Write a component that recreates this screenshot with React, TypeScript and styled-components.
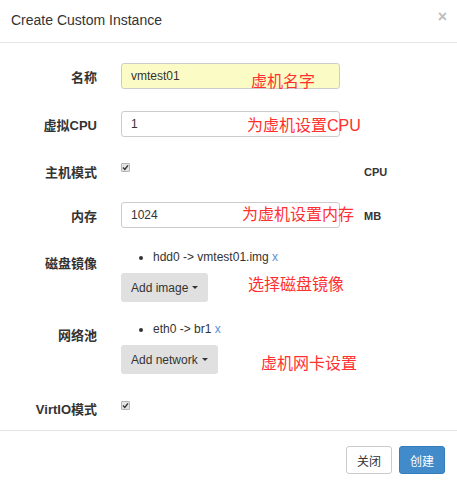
import React from 'react';
import styled, {createGlobalStyle} from 'styled-components'

const GlobalStyle = createGlobalStyle`
    body{
        margin:0;
        background:#fff;
        font-family:"Liberation Sans", "Noto Sans CJK SC", sans-serif;
        color:#333;
    }
`

const notes = [
    {text:"虚机名字", x:251, y:74},
    {text:"为虚机设置CPU", x:247, y:118},
    {text:"为虚机设置内存", x:242, y:207},
    {text:"选择磁盘镜像", x:248, y:277},
    {text:"虚机网卡设置", x:261, y:356},
]

const CheckMark = () => (
    <CheckBox>
        <svg width="7" height="7" viewBox="0 0 7 7">
            <path d="M1 3.6 L2.8 5.4 L6 1.4" stroke="#333" strokeWidth="1.4" fill="none"/>
        </svg>
    </CheckBox>
)

const CreateInstanceModal = () => {
    return (
    <Modal>
        <GlobalStyle/>
        <Header>
            <Title>Create Custom Instance</Title>
            <Close>×</Close>
        </Header>
        <Body>
            <FormRow $top={0}>
                <Label>名称</Label>
                <TextInput $filled value="vmtest01" readOnly/>
            </FormRow>
            <FormRow $top={22}>
                <Label>虚拟CPU</Label>
                <TextInput value="1" readOnly/>
            </FormRow>
            <FormRow $top={21}>
                <Label>主机模式</Label>
                <CheckCell><CheckMark/></CheckCell>
                <Unit>CPU</Unit>
            </FormRow>
            <FormRow $top={20}>
                <Label>内存</Label>
                <TextInput value="1024" readOnly/>
                <Unit>MB</Unit>
            </FormRow>
            <FormRow $top={21}>
                <Label>磁盘镜像</Label>
                <Field>
                    <ItemList>
                        <li>hdd0 -&gt; vmtest01.img <RemoveLink>x</RemoveLink></li>
                    </ItemList>
                    <DropButton>Add image <Caret/></DropButton>
                </Field>
            </FormRow>
            <FormRow $top={19}>
                <Label>网络池</Label>
                <Field>
                    <ItemList>
                        <li>eth0 -&gt; br1 <RemoveLink>x</RemoveLink></li>
                    </ItemList>
                    <DropButton>Add network <Caret/></DropButton>
                </Field>
            </FormRow>
            <FormRow $top={21}>
                <Label>VirtIO模式</Label>
                <CheckCell $offset={6}><CheckMark/></CheckCell>
            </FormRow>
        </Body>
        <Footer>
            <FooterButton>关闭</FooterButton>
            <FooterButton $primary>创建</FooterButton>
        </Footer>
        {notes.map((n)=>(
            <Note key={n.text} $x={n.x} $y={n.y}>{n.text}</Note>
        ))}
    </Modal>
    )
}

const Modal = styled.div`
    position:relative;
    width:457px;
    height:489px;
    background:#fff;
    overflow:hidden;
`

const Header = styled.div`
    display:flex;
    justify-content:space-between;
    align-items:flex-start;
    padding:10px 10px 12px 11px;
    border-bottom:1px solid #e5e5e5;
`

const Title = styled.h4`
    margin:0;
    font-size:14px;
    line-height:20px;
    font-weight:normal;
    color:#333;
`

const Close = styled.span`
    font-size:16px;
    font-weight:bold;
    line-height:16px;
    margin-top:-1px;
    color:#bdbdbd;
`

const Body = styled.div`
    padding:20px 0 11px 0;
`

const FormRow = styled.div<{$top:number}>`
    display:grid;
    grid-template-columns:97px 219px auto;
    column-gap:24px;
    align-items:start;
    margin-top:${(props)=>props.$top}px;
`

const Label = styled.label`
    text-align:right;
    font-size:13px;
    font-weight:bold;
    line-height:18px;
    padding-top:6px;
    color:#333;
`

const TextInput = styled.input<{$filled?:boolean}>`
    box-sizing:border-box;
    width:219px;
    height:26px;
    padding:0 9px;
    border:1px solid #ccc;
    border-radius:3px;
    font-family:inherit;
    font-size:12px;
    color:#333;
    background:${(props)=>props.$filled ? '#fbfcc5' : '#fff'};
    outline:none;
`

const CheckCell = styled.div<{$offset?:number}>`
    padding-top:${(props)=>props.$offset ?? 5}px;
`

const CheckBox = styled.span`
    display:flex;
    align-items:center;
    justify-content:center;
    box-sizing:border-box;
    width:9px;
    height:9px;
    border:1px solid #b5b5b5;
    border-radius:1px;
    background:#e4e4e4;
`

const Unit = styled.span`
    font-size:11px;
    font-weight:bold;
    line-height:18px;
    padding-top:5px;
    color:#333;
`

const Field = styled.div`
    display:flex;
    flex-direction:column;
    align-items:flex-start;
`

const ItemList = styled.ul`
    margin:0;
    padding-left:32px;
    font-size:12px;
    line-height:16px;
    color:#333;
`

const RemoveLink = styled.a`
    color:#5a8fd0;
    text-decoration:none;
`

const DropButton = styled.button`
    display:flex;
    align-items:center;
    gap:4px;
    margin-top:8px;
    height:29px;
    padding:0 10px;
    border:none;
    border-radius:3px;
    background:#e0e0e0;
    font-family:inherit;
    font-size:12px;
    color:#333;
`

const Caret = styled.span`
    width:0;
    height:0;
    border-left:3px solid transparent;
    border-right:3px solid transparent;
    border-top:3px solid #333;
`

const Footer = styled.div`
    display:flex;
    justify-content:flex-end;
    gap:7px;
    padding:15px 12px 15px 0;
    border-top:1px solid #e5e5e5;
`

const FooterButton = styled.button<{$primary?:boolean}>`
    box-sizing:border-box;
    height:28px;
    padding:0 10px;
    border-radius:3px;
    font-family:inherit;
    font-size:12px;
    border:1px solid ${(props)=>props.$primary ? '#357ebd' : '#ccc'};
    background:${(props)=>props.$primary ? '#428bca' : '#fff'};
    color:${(props)=>props.$primary ? '#fff' : '#333'};
`

const Note = styled.span<{$x:number; $y:number}>`
    position:absolute;
    left:${(props)=>props.$x}px;
    top:${(props)=>props.$y}px;
    font-size:16px;
    line-height:16px;
    color:#ff3030;
    white-space:nowrap;
`

export default CreateInstanceModal
